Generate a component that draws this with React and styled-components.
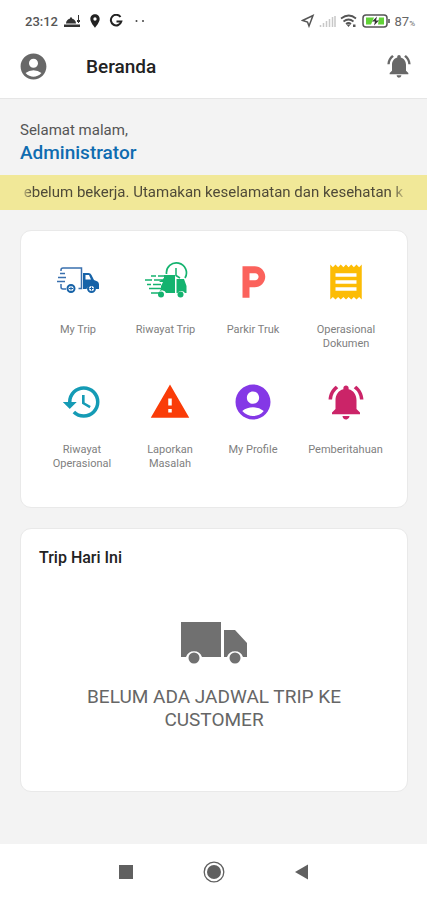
import React from 'react'
import styled, { createGlobalStyle } from 'styled-components'
import {
  MdAccountCircle,
  MdHistory,
  MdLocalParking,
  MdLocationOn,
  MdNotificationsActive,
  MdReceipt,
  MdWarning
} from 'react-icons/md'

const TruckIcon = () => (
  <svg width="44" height="42" viewBox="0 0 44 42" fill="none">
    <path
      d="M5 10V9q0-2 2-2h18.500v20.500h-3M5 23v3q0 2 2 2h3M1 20.500h8M2 16.500h8M4 12.500h5"
      stroke="#3a70ae"
      strokeWidth="1.500"
    />
    <path
      d="M27 12h5.500q2 0 3 2l2.500 5 3.500 1.500q1.500 1 1.500 3v4.500h-3a5 5 0 0 0-9.500 0H27z"
      fill="#1763a8"
    />
    <path d="M29.500 14v4.500h5.500l-2-4.500z" fill="#fff" />
    <circle cx="15" cy="27.500" r="3.500" stroke="#1763a8" strokeWidth="2" />
    <circle cx="35.500" cy="27.500" r="3.500" stroke="#1763a8" strokeWidth="2" />
    <path d="M15 25.500v4M13 27.500h4M35.500 25.500v4M33.500 27.500h4" stroke="#1763a8" />
  </svg>
)

const TruckHistoryIcon = () => (
  <svg width="44" height="42" viewBox="0 0 44 42" fill="none">
    <path
      d="M22.500 13a10 10 0 1 1 18.500 4"
      stroke="#14b36f"
      strokeWidth="1.700"
    />
    <path d="M32 7v7.500l4 2.500" stroke="#14b36f" strokeWidth="1.500" />
    <path
      d="M7 15h5M14 15h6M1 19h7M10 19h8M3 23.500h4M9 23.500h8M5 27.500h12M7 32h9"
      stroke="#14b36f"
      strokeWidth="1.700"
    />
    <path
      d="M20 14h11v18h-9a4 4 0 0 0-7-1l2-3v-3l2-4h-4l5-4zM32.500 18H40l2.500 7v7H41a4.500 4.500 0 0 0-7.500 0h-1z"
      fill="#14b36f"
    />
    <circle cx="17" cy="33.500" r="3" fill="#14b36f" />
    <circle cx="36.500" cy="33.500" r="3" fill="#14b36f" />
  </svg>
)

const menu = [
  {
    columns: '88fr 87fr 88fr 98fr',
    padding: '0 12px 0 13px',
    items: [
      { label: 'My Trip', icon: <TruckIcon /> },
      { label: 'Riwayat Trip', icon: <TruckHistoryIcon /> },
      { label: 'Parkir Truk', icon: <MdLocalParking />, color: '#fb625c' },
      { label: 'Operasional Dokumen', icon: <MdReceipt />, color: '#fcbc05' }
    ]
  },
  {
    columns: '82fr 94fr 72fr 113fr',
    padding: '0 5px 0 20px',
    items: [
      { label: 'Riwayat Operasional', icon: <MdHistory />, color: '#159bb5' },
      { label: 'Laporkan Masalah', icon: <MdWarning />, color: '#fa3c08' },
      { label: 'My Profile', icon: <MdAccountCircle />, color: '#8438e6' },
      {
        label: 'Pemberitahuan',
        icon: <MdNotificationsActive />,
        color: '#cb2468'
      }
    ]
  }
]

const StatusBar = () => (
  <Status>
    <StatusGroup>
      <Clock>23:12</Clock>
      <svg width="17" height="14" viewBox="0 0 17 14" fill="#333">
        <path d="M2 9.500a5 5 0 0 1 10 0zM0 10.500h16V13H0zM6 3.500h2v2H6zM14 1h1v8h-1zM13 6h3v2h-3z" />
      </svg>
      <MdLocationOn size={16} color="#222" />
      <svg width="14" height="14" viewBox="0 0 14 14" fill="none">
        <path
          d="M11.500 3A5.300 5.300 0 1 0 12.300 7.500H7.500"
          stroke="#222"
          strokeWidth="2"
        />
      </svg>
      <Dots viewBox="0 0 10 4">
        <circle cx="1.500" cy="2" r="1" />
        <circle cx="8" cy="2" r="1" />
      </Dots>
    </StatusGroup>
    <StatusGroup $tight>
      <svg width="14" height="14" viewBox="0 0 14 14" fill="none">
        <path d="M1.500 6.500 12 1.500 8 12 6.500 8z" stroke="#555" strokeWidth="1.500" />
      </svg>
      <svg width="17" height="13" viewBox="0 0 17 13">
        <path
          d="M1.500 12v-2M4.500 12V8M7.500 12V6M10.500 12V4M13.500 12V2M16 12V1"
          stroke="#c8c8c8"
          strokeWidth="1.500"
        />
      </svg>
      <svg width="18" height="14" viewBox="0 0 18 14" fill="none">
        <path
          d="M1 4.500q8-6 15 0M3.500 7.500q5-4 10 0M6 10q2.500-2 5 0"
          stroke="#555"
          strokeWidth="1.700"
        />
        <path d="m6.500 10.500 2 2.500 2-2.500zM13 10.500h2.500v2.500H13z" fill="#555" />
      </svg>
      <svg width="29" height="14" viewBox="0 0 29 14" fill="none">
        <rect x="1" y="1" width="24" height="12" rx="3" stroke="#555" strokeWidth="1.500" />
        <path d="M4 3.500h8l-3 7H4zM17 3.500h5v7h-6z" fill="#61d337" />
        <path d="m15 2.500-5 5h3l-1 4 5-5h-3z" fill="#333" />
        <path d="M27 5v4" stroke="#777" strokeWidth="2" />
      </svg>
      <Battery>
        87<small>%</small>
      </Battery>
    </StatusGroup>
  </Status>
)

const App = () => (
  <Screen>
    <GlobalStyle />
    <Top>
      <StatusBar />
      <Toolbar>
        <IconButton aria-label="Profil">
          <MdAccountCircle size={31} />
        </IconButton>
        <PageTitle>Beranda</PageTitle>
        <IconButton aria-label="Notifikasi">
          <MdNotificationsActive size={28} />
        </IconButton>
      </Toolbar>
    </Top>
    <Greeting>
      Selamat malam,
      <UserName>Administrator</UserName>
    </Greeting>
    <Ticker>
      <TickerText>
        ebelum bekerja. Utamakan keselamatan dan kesehatan k
      </TickerText>
    </Ticker>
    <Content>
      <MenuCard>
        {menu.map(row => (
          <MenuRow key={row.columns} $columns={row.columns} $padding={row.padding}>
            {row.items.map(item => (
              <MenuItem key={item.label}>
                <MenuIcon $color={item.color}>{item.icon}</MenuIcon>
                <MenuLabel>{item.label}</MenuLabel>
              </MenuItem>
            ))}
          </MenuRow>
        ))}
      </MenuCard>
      <TripCard>
        <CardTitle>Trip Hari Ini</CardTitle>
        <Empty>
          <svg width="68" height="44" viewBox="0 0 68 44" fill="#707070">
            <path d="M1 1h40v35H22a8.500 8.500 0 0 0-16 0H1zM44 9h11l12 13v14h-4a8.500 8.500 0 0 0-16 0h-3z" />
            <circle cx="14" cy="37" r="5.500" />
            <circle cx="55" cy="37" r="5.500" />
          </svg>
          <EmptyText>BELUM ADA JADWAL TRIP KE CUSTOMER</EmptyText>
        </Empty>
      </TripCard>
    </Content>
    <NavBar>
      <NavButton aria-label="Aplikasi terbaru">
        <svg width="22" height="22" viewBox="0 0 22 22" fill="#606060">
          <path d="M4 4h14v14H4z" />
        </svg>
      </NavButton>
      <NavButton aria-label="Layar utama">
        <svg width="22" height="22" viewBox="0 0 22 22" fill="#606060">
          <circle cx="11" cy="11" r="7" />
          <circle cx="11" cy="11" r="9.800" fill="none" stroke="#606060" strokeWidth="1.300" />
        </svg>
      </NavButton>
      <NavButton aria-label="Kembali">
        <svg width="22" height="22" viewBox="0 0 22 22" fill="#606060">
          <path d="M4 11 17 3.500v15z" />
        </svg>
      </NavButton>
    </NavBar>
  </Screen>
)

const GlobalStyle = createGlobalStyle`
  * {
    box-sizing: border-box;
  }

  body {
    margin: 0;
    background: #f3f3f3;
    font-family: Roboto, 'Liberation Sans', sans-serif;
  }

  svg {
    display: block;
    flex: none;
  }
`

const Screen = styled.div`
  min-height: 100vh;
  display: flex;
  flex-direction: column;
`

const Top = styled.header`
  background: #fff;
  border-bottom: 1px solid #e6e6e6;
`

const Status = styled.div`
  height: 42px;
  padding: 0 12px 0 25px;
  display: flex;
  align-items: center;
  justify-content: space-between;
`

const StatusGroup = styled.div`
  display: flex;
  align-items: center;
  gap: ${props => (props.$tight ? '4px' : '6px')};
`

const Clock = styled.span`
  font-size: 13px;
  font-weight: 500;
  color: #555;
`

const Dots = styled.svg`
  width: 10px;
  height: 4px;
  margin-left: 6px;
  fill: #444;
`

const Battery = styled.span`
  font-size: 13px;
  color: #666;

  small {
    font-size: 8px;
  }
`

const Toolbar = styled.div`
  height: 56px;
  padding: 0 14px 8px 18px;
  display: flex;
  align-items: center;
`

const IconButton = styled.button`
  padding: 0;
  border: none;
  background: none;
  color: #686868;
  cursor: pointer;
`

const PageTitle = styled.h1`
  flex: 1;
  margin: 0 0 0 37px;
  font-size: 19px;
  font-weight: 500;
  color: #222;
`

const Greeting = styled.div`
  padding: 20px 20px 10px;
  font-size: 15px;
  line-height: 22px;
  color: #555;
`

const UserName = styled.div`
  font-size: 19px;
  font-weight: 500;
  line-height: 24px;
  color: #0f6cb0;
`

const Ticker = styled.div`
  padding: 0 20px;
  background: #f1e898;
`

const TickerText = styled.div`
  overflow: hidden;
  white-space: nowrap;
  text-align: center;
  font-size: 15px;
  line-height: 35px;
  color: #4f4a38;
  mask-image: linear-gradient(
    to right,
    transparent,
    #000 12px,
    #000 calc(100% - 14px),
    transparent
  );
`

const Content = styled.main`
  flex: 1;
  padding: 20px 19px 52px 20px;
  display: flex;
  flex-direction: column;
  gap: 20px;
`

const Card = styled.section`
  background: #fff;
  border: 1px solid #e9e9e9;
  border-radius: 11px;
`

const MenuCard = styled(Card)`
  padding: 30px 0 36px;
  display: flex;
  flex-direction: column;
  gap: 30px;
`

const MenuRow = styled.div`
  display: grid;
  grid-template-columns: ${props => props.$columns};
  padding: ${props => props.$padding};
`

const MenuItem = styled.button`
  padding: 0;
  border: none;
  background: none;
  display: flex;
  flex-direction: column;
  align-items: center;
  gap: 20px;
  font-family: inherit;
  cursor: pointer;
`

const MenuIcon = styled.span`
  font-size: 42px;
  color: ${props => props.$color};
`

const MenuLabel = styled.span`
  max-width: 76px;
  font-size: 11px;
  line-height: 14px;
  color: #808080;
`

const TripCard = styled(Card)`
  flex: 1;
  padding: 18px;
`

const CardTitle = styled.h2`
  margin: 0;
  font-size: 16px;
  font-weight: 500;
  line-height: 22px;
  color: #222;
`

const Empty = styled.div`
  padding: 52px 40px 40px;
  display: flex;
  flex-direction: column;
  align-items: center;
  gap: 20px;
`

const EmptyText = styled.p`
  margin: 0;
  font-size: 19px;
  line-height: 23px;
  text-align: center;
  color: #666;
`

const NavBar = styled.nav`
  height: 56px;
  background: #fff;
  display: flex;
  align-items: center;
  justify-content: center;
  gap: 66px;
`

const NavButton = styled.button`
  padding: 0;
  border: none;
  background: none;
  cursor: pointer;
`

export default App
